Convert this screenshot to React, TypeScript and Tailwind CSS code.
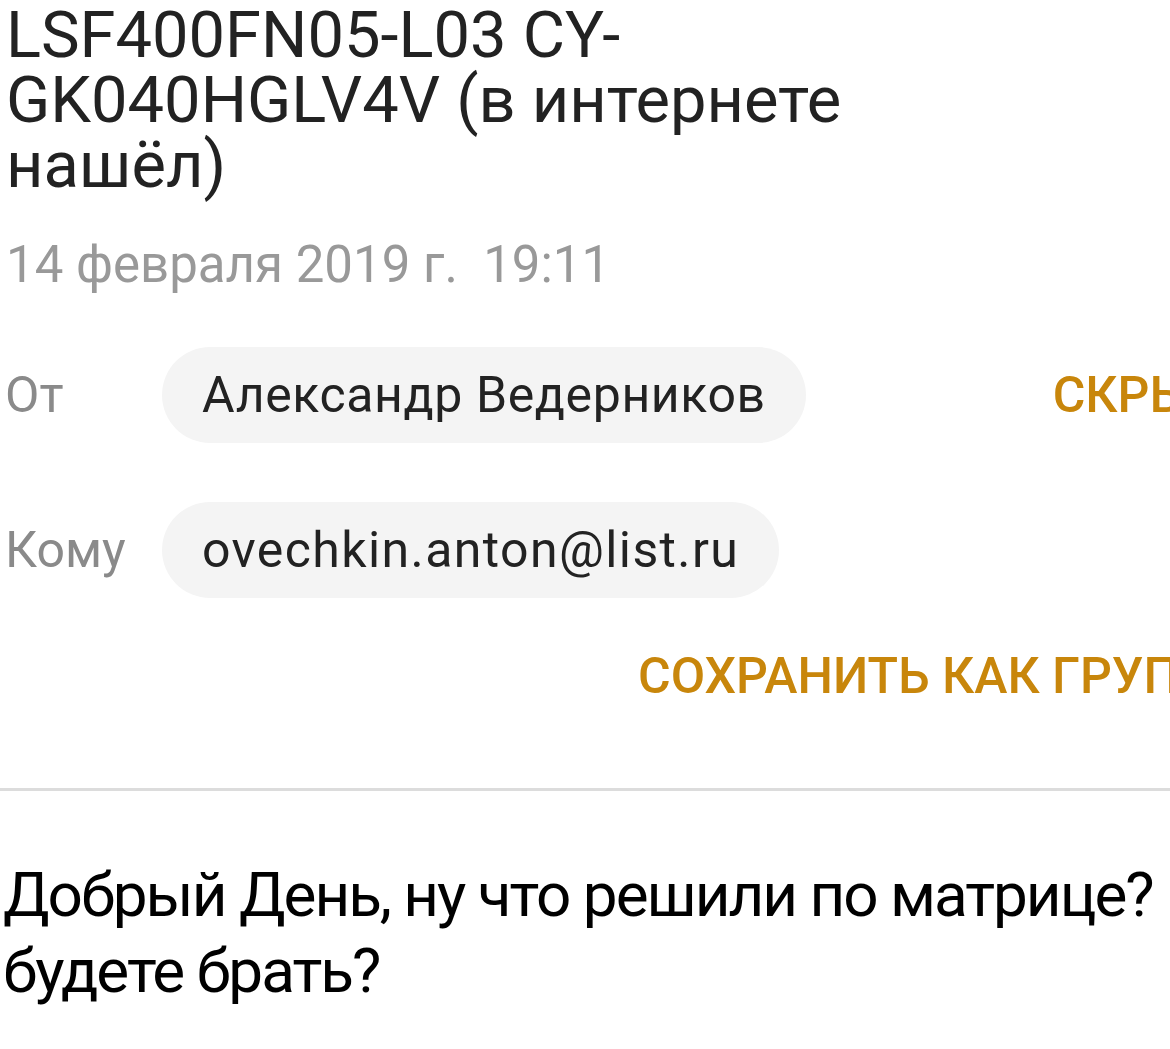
export default function App() {
  return (
    <div className="relative h-[1049px] w-[1170px] overflow-hidden bg-white">
      <div className="pl-[6px] pt-[3px]">
        <h1 className="w-[900px] font-['Roboto',sans-serif] text-[65px] font-normal leading-[65px] text-[#222]">
          LSF400FN05-L03 CY-GK040HGLV4V (в интернете нашёл)
        </h1>
        <div className="mt-[37px] whitespace-pre font-['Roboto',sans-serif] text-[51px] leading-[60px] text-[#999]">
          14 февраля 2019 г.  19:11
        </div>
      </div>

      <div className="mt-[52px] flex items-center whitespace-nowrap font-['Roboto',sans-serif]">
        <div className="w-[162px] shrink-0 pl-[5px] text-[50px] text-[#8a8a8a]">От</div>
        <div className="flex h-[96px] shrink-0 items-center rounded-full bg-[#f4f4f4] px-[40px] text-[50px] tracking-[0.6px] text-[#222]">
          Александр Ведерников
        </div>
        <div className="ml-[247px] shrink-0 text-[50px] font-medium text-[#c8860b]">СКРЫТЬ</div>
      </div>

      <div className="mt-[59px] flex items-center whitespace-nowrap font-['Roboto',sans-serif]">
        <div className="w-[162px] shrink-0 pl-[5px] text-[50px] text-[#8a8a8a]">Кому</div>
        <div className="flex h-[96px] shrink-0 items-center rounded-full bg-[#f4f4f4] px-[40px] text-[50px] tracking-[1.4px] text-[#222]">
          ovechkin.anton@list.ru
        </div>
      </div>

      <div className="mt-[48px] whitespace-nowrap pl-[638px] font-['Roboto',sans-serif] text-[50px] font-medium leading-[60px] text-[#c8860b]">
        СОХРАНИТЬ КАК ГРУППУ
      </div>

      <div className="mt-[82px] h-[3px] bg-[#dcdcdc]" />

      <div className="mt-[66px] whitespace-nowrap pl-[3px] font-['Roboto',sans-serif] text-[62px] leading-[76px] tracking-[-2px] text-black">
        <p>Добрый День, ну что решили по матрице?</p>
        <p>будете брать?</p>
      </div>
    </div>
  );
}
